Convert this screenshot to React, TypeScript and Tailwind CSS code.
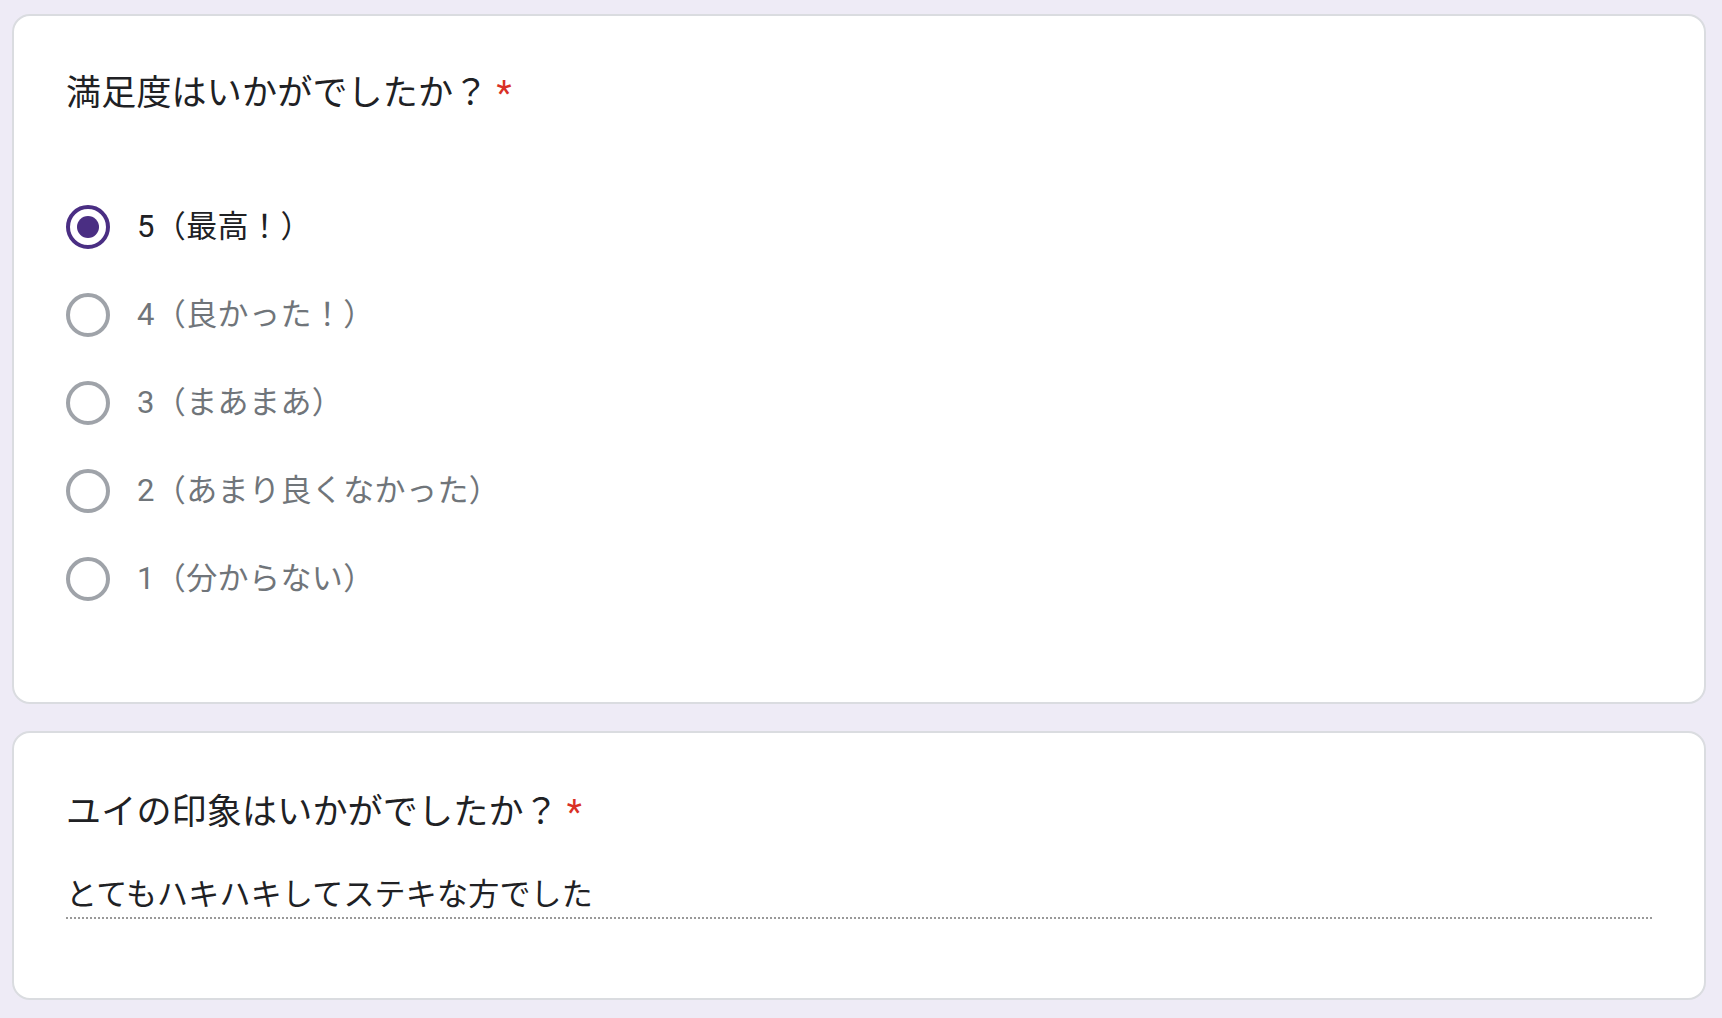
import React from "react";

const options = [
  "5（最高！）",
  "4（良かった！）",
  "3（まあまあ）",
  "2（あまり良くなかった）",
  "1（分からない）",
];

const FONT = "font-['Roboto','Noto_Sans_CJK_JP',sans-serif]";

function Radio({ checked }: { checked: boolean }) {
  if (checked) {
    return (
      <div className="w-[44px] h-[44px] rounded-full border-[4px] border-[#4a2e83] flex items-center justify-center shrink-0">
        <div className="w-[22px] h-[22px] rounded-full bg-[#4a2e83]" />
      </div>
    );
  }
  return <div className="w-[44px] h-[44px] rounded-full border-[4px] border-[#9fa3a9] shrink-0" />;
}

export default function App() {
  return (
    <div className={`min-h-[1018px] w-full bg-[#eeebf6] pt-[14px] pb-[19px] pl-[12px] pr-[16px] ${FONT}`}>
      <div className="bg-white border-[2px] border-[#dadce0] rounded-[18px] h-[690px] px-[52px] pt-[51px]">
        <div className="text-[35px] leading-[53px] text-[#202124] tracking-[0.2px]">
          満足度はいかがでしたか？<span className="text-[#d93025] ml-[8px]">*</span>
        </div>
        <div className="mt-[63px] flex flex-col">
          {options.map((o, i) => (
            <div key={o} className="h-[88px] flex items-center">
              <Radio checked={i === 0} />
              <span
                className={`ml-[27px] text-[31px] tracking-[0.4px] ${i === 0 ? "text-[#202124]" : "text-[#70757a]"}`}
              >
                {o}
              </span>
            </div>
          ))}
        </div>
      </div>
      <div className="mt-[27px] bg-white border-[2px] border-[#dadce0] rounded-[18px] h-[269px] px-[52px] pt-[53px]">
        <div className="text-[35px] leading-[53px] text-[#202124] tracking-[0.2px]">
          ユイの印象はいかがでしたか？<span className="text-[#d93025] ml-[8px]">*</span>
        </div>
        <div className="mt-[33px] border-b-[2px] border-dotted border-[#999999]">
          <span className="block text-[31px] leading-[45px] text-[#202124] tracking-[0.2px]">とてもハキハキしてステキな方でした</span>
        </div>
      </div>
    </div>
  );
}
